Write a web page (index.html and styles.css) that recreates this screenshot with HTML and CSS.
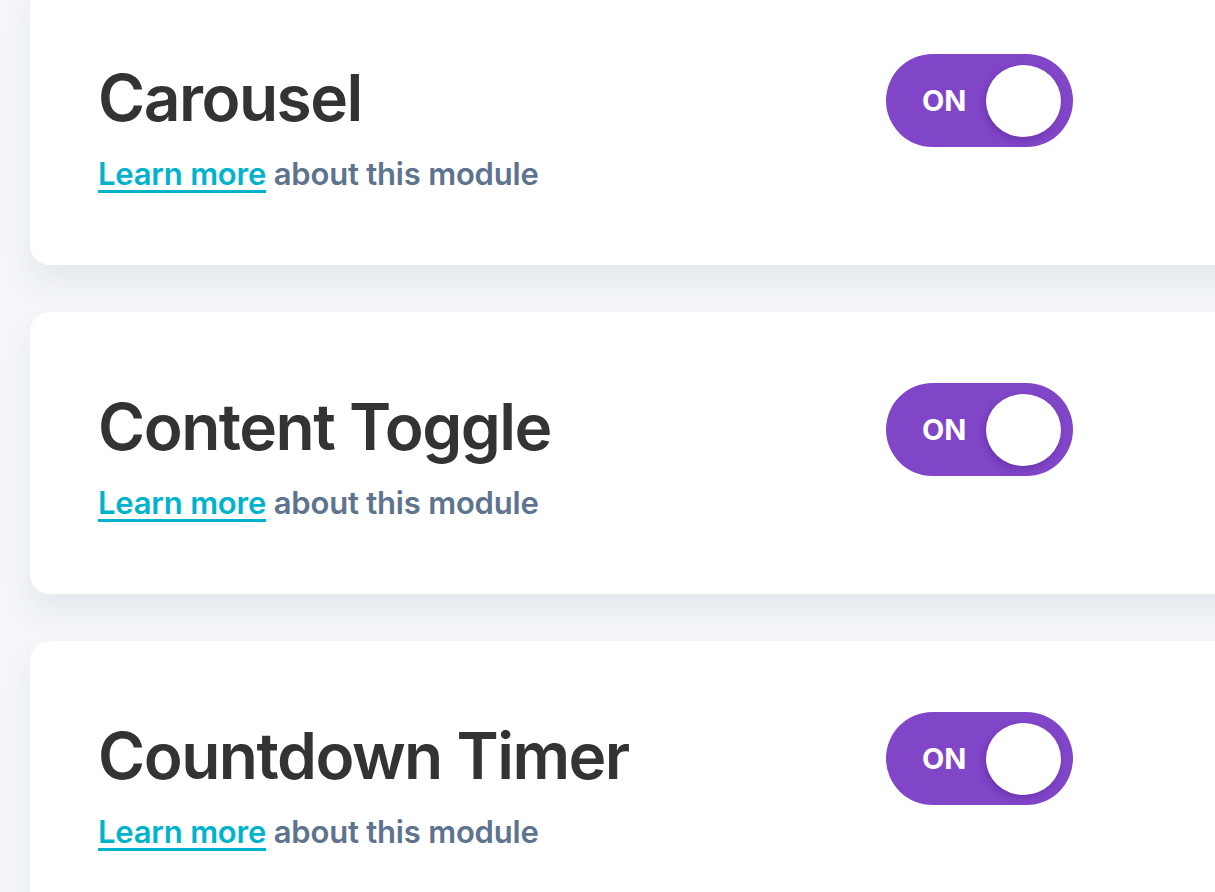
FILE: index.html
```html
<!DOCTYPE html>
<html lang="en">
<head>
    <meta charset="UTF-8">
    <meta name="viewport" content="width=device-width, initial-scale=1.0">
    <title>Modules</title>
    <link rel="stylesheet" href="styles.css">
</head>
<body>
    <div class="module-list">
        <!-- Carousel -->
        <div class="module-card">
            <div class="module-info">
                <h2 class="module-title">Carousel</h2>
                <p class="module-desc"><a href="#">Learn more</a> about this module</p>
            </div>
            <button class="switch is-on"><span class="switch-label">ON</span><span class="switch-knob"></span></button>
        </div>

        <!-- Content Toggle -->
        <div class="module-card">
            <div class="module-info">
                <h2 class="module-title">Content Toggle</h2>
                <p class="module-desc"><a href="#">Learn more</a> about this module</p>
            </div>
            <button class="switch is-on"><span class="switch-label">ON</span><span class="switch-knob"></span></button>
        </div>

        <!-- Countdown Timer -->
        <div class="module-card">
            <div class="module-info">
                <h2 class="module-title">Countdown Timer</h2>
                <p class="module-desc"><a href="#">Learn more</a> about this module</p>
            </div>
            <button class="switch is-on"><span class="switch-label">ON</span><span class="switch-knob"></span></button>
        </div>
    </div>
</body>
</html>
```

FILE: styles.css
```css
html, body {
    margin: 0;
    height: 100%;
    overflow: hidden;
}
body {
    font-family: Inter, "Liberation Sans", Arial, sans-serif;
    background-color: #f4f6f9;
    color: #333333;
}
.module-list {
    display: flex;
    flex-direction: column;
    gap: 47px;
    margin-top: -17px;
    padding-left: 30px;
}
.module-card {
    display: grid;
    grid-template-columns: 788px auto;
    align-items: start;
    width: 1250px;
    height: 282px;
    box-sizing: border-box;
    padding: 76px 0 0 68px;
    background: #ffffff;
    border-radius: 20px;
    box-shadow: 0 18px 30px rgba(40, 60, 100, 0.07);
}
.module-title {
    margin: 0;
    font-size: 64px;
    font-weight: 600;
    line-height: 77px;
    letter-spacing: -1.5px;
    color: #333333;
}
.module-desc {
    margin: 18px 0 0;
    font-size: 31px;
    font-weight: 600;
    line-height: 39px;
    letter-spacing: -0.2px;
    color: #5e738d;
}
.module-desc a {
    color: #00b3cc;
    text-decoration: underline;
    text-decoration-thickness: 3px;
    text-underline-offset: 5px;
}
.switch {
    display: flex;
    align-items: center;
    justify-content: space-between;
    width: 187px;
    height: 93px;
    margin-top: -5px;
    padding: 0 12px 0 36px;
    box-sizing: border-box;
    border: none;
    border-radius: 47px;
    background: #8145c8;
    cursor: pointer;
}
.switch-label {
    font-family: Inter, "Liberation Sans", Arial, sans-serif;
    font-size: 29px;
    font-weight: 700;
    color: #ffffff;
}
.switch-knob {
    width: 75px;
    height: 72px;
    border-radius: 50%;
    background: #ffffff;
    box-shadow: -2px 3px 6px rgba(60, 20, 110, 0.3);
}
```
